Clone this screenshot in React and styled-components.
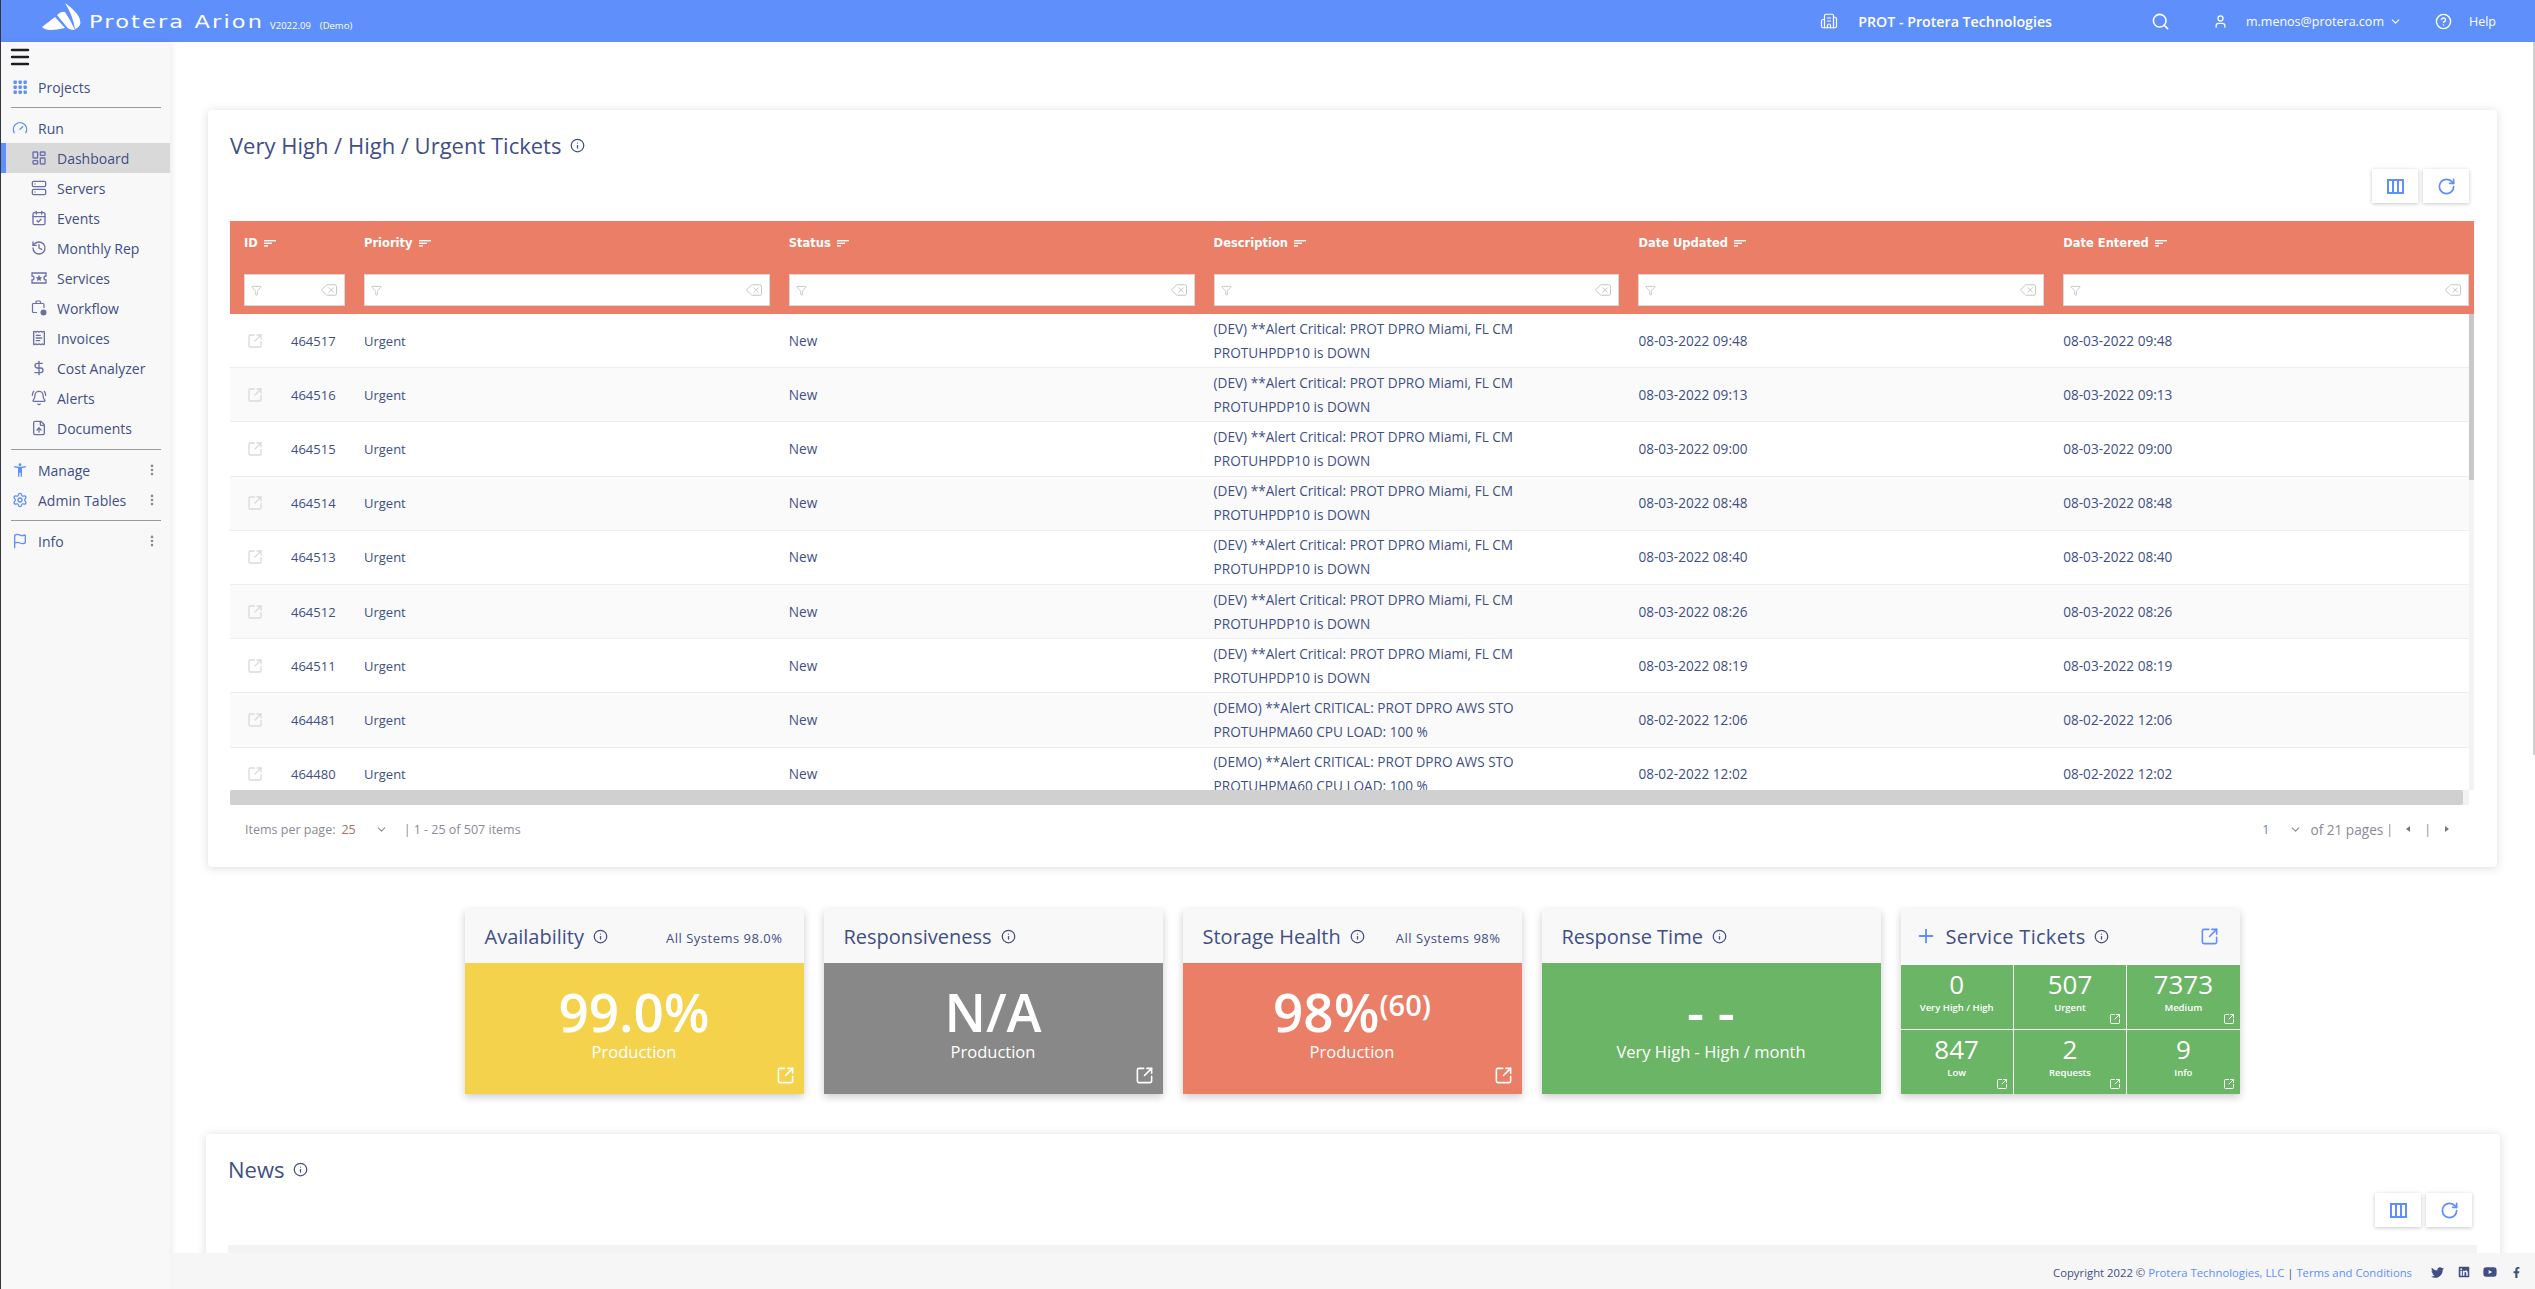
import React from 'react'
import styled, { createGlobalStyle } from 'styled-components'
import {
  Gauge, LayoutDashboard, Server, CalendarCheck, History, ReceiptText,
  DollarSign, BellRing, FileUp, Settings, Flag, EllipsisVertical,
  SquareArrowOutUpRight, RotateCw, Delete, Funnel, Building2, Search, User,
  ChevronDown, CircleHelp, Info, Plus, Menu,
} from 'lucide-react'
import { FaTwitter, FaLinkedin, FaYoutube, FaFacebookF } from 'react-icons/fa'
import { MdAccessibilityNew } from 'react-icons/md'

const navy = '#414f86'
const blue = '#5f8ffb'
const salmon = '#ea7e66'
const green = '#6ab566'

const GlobalStyle = createGlobalStyle`
  html, body { margin: 0; height: 100%; background: #fff; overflow: hidden; }
  #root { height: 100%; }
  * { box-sizing: border-box; }
  body { font-family: "Open Sans", "Noto Sans", sans-serif; color: ${navy}; }
`

const Page = styled.div`
  position: relative;
  height: 100vh;
  display: flex;
  flex-direction: column;
  overflow: hidden;
  border-left: 1px solid #35353d;
`

const PageThumb = styled.div`
  position: absolute;
  top: 42px;
  right: 0;
  width: 2px;
  height: 713px;
  background: #cfcfcf;
`

const TopBar = styled.header`
  height: 42px;
  flex: none;
  background: ${blue};
  color: #fff;
  display: flex;
  align-items: center;
  padding-left: 41px;
`

const BrandName = styled.span`
  display: inline-block;
  font-family: "DejaVu Sans", sans-serif;
  font-size: 18px;
  letter-spacing: 1.7px;
  margin-left: 7px;
  white-space: nowrap;
  transform: scaleX(1.25);
  transform-origin: left center;
`

const Version = styled.span`
  font-size: 9.5px;
  margin-left: ${p => p.$gap}px;
  padding-top: 8px;
  white-space: nowrap;
`

const TopRight = styled.div`
  margin-left: auto;
  display: flex;
  align-items: center;
  padding-right: 39px;
`

const Company = styled.span`
  font-size: 14.2px;
  font-weight: 600;
  margin: 0 99px 0 20px;
  white-space: nowrap;
`

const TopGap = styled.span`
  width: ${p => p.$width}px;
`

const Email = styled.span`
  font-size: 12.5px;
  margin: 0 5px 0 18px;
`

const HelpLabel = styled.span`
  font-size: 12.5px;
  margin-left: 17px;
`

const Body = styled.div`
  flex: 1;
  display: flex;
  min-height: 0;
`

const Sidebar = styled.nav`
  width: 169px;
  flex: none;
  background: #f8f8f8;
  box-shadow: 2px 0 6px rgba(0, 0, 0, 0.08);
  z-index: 2;
`

const MenuButton = styled.div`
  height: 30px;
  padding-left: 7px;
  display: flex;
  align-items: center;
  color: #1c1c22;
`

const NavRow = styled.div`
  height: 30px;
  display: flex;
  align-items: center;
  gap: 10px;
  padding-left: ${p => (p.$sub ? (p.$active ? 25 : 30) : 11)}px;
  padding-right: 11px;
  font-size: 14px;
  color: ${navy};
  background: ${p => (p.$active ? '#d9d9d9' : 'transparent')};
  border-left: ${p => (p.$active ? `5px solid ${blue}` : '0')};

  > svg:first-child {
    width: 16px;
    height: 16px;
    flex: none;
    color: ${p => (p.$sub ? '#6b70a8' : blue)};
  }
`

const NavMore = styled.span`
  margin-left: auto;
  display: flex;
  color: #8a8a94;
`

const TicketLink = styled(NavMore)`
  color: ${blue};
`

const Divider = styled.hr`
  border: 0;
  height: 1px;
  background: #999;
  margin: ${p => p.$top}px 9px ${p => p.$bottom}px 10px;
`

const Main = styled.main`
  flex: 1;
  min-width: 0;
  padding-top: 68px;
  overflow: hidden;
`

const Card = styled.section`
  background: #fff;
  border-radius: 4px;
  box-shadow: 0 1px 10px rgba(60, 60, 90, 0.18);
  padding: 20px 23px 0 22px;
  margin: ${p => p.$margin};
  height: ${p => p.$height}px;
  overflow: hidden;
`

const CardTitle = styled.h2`
  margin: 0;
  height: 30px;
  display: flex;
  align-items: center;
  gap: 9px;
  font-size: 22px;
  font-weight: 500;
  color: ${navy};

  svg { width: 15px; height: 15px; }
`

const Toolbar = styled.div`
  display: flex;
  justify-content: flex-end;
  gap: 5px;
  margin: 9px 5px 18px 0;
`

const ToolButton = styled.button`
  width: 46px;
  height: 34px;
  border: 0;
  background: #fff;
  color: ${blue};
  box-shadow: 0 1px 4px rgba(0, 0, 0, 0.22);
  display: flex;
  align-items: center;
  justify-content: center;
  padding: 0;
`

const gridColumns = '120px repeat(5, 424.8px)'

const TableHead = styled.div`
  background: ${salmon};
  height: 93px;
  display: grid;
  grid-template-columns: ${gridColumns};
`

const HeadCell = styled.div`
  padding: 0 5px 0 14px;
  display: flex;
  flex-direction: column;
`

const HeadLabel = styled.div`
  height: 46px;
  padding-bottom: 2px;
  display: flex;
  align-items: center;
  gap: 6px;
  font-family: "DejaVu Sans", sans-serif;
  font-size: 11.5px;
  font-weight: 700;
  color: #fff;
`

const FilterBox = styled.div`
  height: 32px;
  margin-top: 7px;
  background: #fff;
  border: 1px solid #d8d8d8;
  display: flex;
  align-items: center;
  justify-content: space-between;
  padding: 0 6px;
  color: #c4c4c4;
`

const TableBody = styled.div`
  display: flex;
  height: 476px;
`

const Rows = styled.div`
  flex: 1;
  min-width: 0;
  overflow: hidden;
`

const Row = styled.div`
  height: 54.2px;
  display: grid;
  grid-template-columns: ${gridColumns};
  align-items: center;
  background: ${p => (p.$even ? '#fafafa' : '#fff')};
  border-bottom: 1px solid #eeeeee;
  font-size: 13px;
  color: ${navy};
`

const IdCell = styled.div`
  display: flex;
  align-items: center;
  padding-left: 17px;
  gap: 28px;
  color: #dadada;
`

const IdText = styled.span`
  color: ${navy};
`

const Cell = styled.div`
  padding-left: 14px;
  line-height: 24px;
  white-space: pre-line;
  font-size: ${p => (p.$wide ? 13.6 : 13)}px;
`

const VScroll = styled.div`
  width: 5px;
  flex: none;
  background: #f3f3f3;
`

const VThumb = styled.div`
  height: 166px;
  background: #c8c8c8;
`

const HScroll = styled.div`
  height: 15px;
  padding-right: 11px;
  background: linear-gradient(to left, #fff 5px, #f3f3f3 5px);
`

const HThumb = styled.div`
  height: 15px;
  background: #cfd0cf;
  border-radius: 2px;
`

const Pager = styled.div`
  display: flex;
  align-items: center;
  height: 54px;
  padding: 0 25px 6px 15px;
  font-size: 12.5px;
  color: #8a8a96;
`

const PagerValue = styled.span`
  color: ${p => p.$color};
  margin-left: ${p => p.$left};
`

const PagerPages = styled.span`
  font-size: 13.6px;
`

const PagerChevron = styled(ChevronDown)`
  margin: ${p => p.$margin};
`

const PagerSep = styled.span`
  color: #8a8a96;
  margin: ${p => p.$margin};
`

const Arrow = styled.span`
  width: 0;
  height: 0;
  border-top: 3.5px solid transparent;
  border-bottom: 3.5px solid transparent;
  border-${p => (p.$left ? 'right' : 'left')}: 4px solid #777;
`

const KpiRow = styled.div`
  display: flex;
  justify-content: center;
  gap: 20px;
  margin-top: 42px;
  padding-right: 1px;
`

const Kpi = styled.article`
  width: 339px;
  height: 185px;
  display: flex;
  flex-direction: column;
  box-shadow: 0 3px 8px rgba(0, 0, 0, 0.2);
`

const KpiHead = styled.div`
  height: 54px;
  flex: none;
  background: #f8f8f8;
  display: flex;
  align-items: center;
  padding: 0 21px 0 20px;
  gap: 9px;
  font-size: 20px;
  color: ${navy};

  > svg { width: 15px; height: 15px; }
`

const KpiNote = styled.span`
  margin-left: auto;
  font-size: 13px;
  letter-spacing: 0.5px;
  padding-top: 3px;
`

const KpiBody = styled.div`
  position: relative;
  flex: 1;
  background: ${p => p.$color};
  color: #fff;
  display: flex;
  flex-direction: column;
  align-items: center;
  padding-top: 20px;
`

const KpiValue = styled.div`
  font-size: 53px;
  line-height: 57px;
  font-weight: 600;
  white-space: nowrap;
`

const KpiSup = styled.span`
  font-size: 29px;
  line-height: 0;
  vertical-align: 16px;
  font-weight: 600;
`

const KpiLabel = styled.div`
  font-size: 16.5px;
  line-height: 24px;
`

const CornerLink = styled.span`
  position: absolute;
  right: ${p => p.$right}px;
  bottom: ${p => p.$bottom}px;
  display: flex;
`

const TicketHead = styled(KpiHead)`
  padding: 0 21px 0 14px;
  gap: 9px;
  letter-spacing: 0.3px;

  > svg:first-child { width: 22px; height: 22px; color: ${blue}; }
`

const TicketGrid = styled.div`
  flex: 1;
  display: grid;
  grid-template-columns: repeat(3, 1fr);
  grid-template-rows: repeat(2, 1fr);
  gap: 1px;
  background: #fff;
  margin-top: 2px;
`

const TicketCell = styled.div`
  position: relative;
  background: ${green};
  color: #fff;
  display: flex;
  flex-direction: column;
  align-items: center;
  padding-top: 2px;
`

const TicketNum = styled.div`
  font-size: 26px;
  line-height: 34px;
`

const TicketLabel = styled.div`
  font-size: 9.5px;
  line-height: 14px;
  font-weight: 600;
`

const NewsHeader = styled.div`
  height: 60px;
  background: #f3f3f3;
`

const Footer = styled.footer`
  position: absolute;
  left: 169px;
  right: 0;
  bottom: 0;
  height: 36px;
  background: #f6f6f6;
  display: flex;
  align-items: center;
  justify-content: flex-end;
  padding: 2px 13.5px 0 0;
  font-size: 11.3px;
  color: ${navy};
  z-index: 3;
`

const FooterLink = styled.span`
  color: ${blue};
`

const Social = styled.span`
  display: flex;
  align-items: center;
  gap: 13.5px;
  margin-left: 19px;
  color: ${navy};
`

function Logo() {
  return (
    <svg width="40" height="30" viewBox="0 0 40 30" style={{ marginTop: -12 }}>
      <path fill="#fff" d="M0 27 L13 17 L23 28 Q15 30 8 30 Q3 30 0 27Z" />
      <path fill="#fff" d="M15 15 Q19 11 23 12 Q29 21 33 30 Q26 30 24 26Z" />
      <path fill="#fff" d="M23 3 Q33 10 37 17 Q39 22 38 25 Q36 28 33 29 Q31 16 23 3Z" />
    </svg>
  )
}

function SortIcon() {
  return (
    <svg width="12" height="7" viewBox="0 0 12 7" fill="#fff">
      <rect x="0" y="0" width="12" height="1.4" />
      <rect x="0" y="2.6" width="8" height="1.4" />
      <rect x="0" y="5.2" width="4" height="1.4" />
    </svg>
  )
}

function ProjectsIcon() {
  const spots = [1.5, 6.5, 11.5]
  return (
    <svg viewBox="0 0 16 16" fill="currentColor">
      {spots.map(y => spots.map(x => <rect key={`${x}-${y}`} x={x} y={y} width="3.4" height="3.4" rx="0.8" />))}
    </svg>
  )
}

function TicketStarIcon() {
  return (
    <svg viewBox="0 0 16 16" fill="none" stroke="currentColor" strokeWidth="1.3">
      <path d="M1 3h14v3a2 2 0 0 0 0 4v3H1v-3a2 2 0 0 0 0-4z" />
      <path fill="currentColor" stroke="none" d="M8 4.800l1 2.100 2.300.3-1.700 1.600.4 2.300-2-1.100-2 1.100.4-2.300-1.700-1.600 2.300-.3z" />
    </svg>
  )
}

function WorkflowIcon() {
  return (
    <svg viewBox="0 0 16 16" fill="none" stroke="currentColor" strokeWidth="1.2">
      <path d="M6 12.500H2.500a1 1 0 0 1-1-1v-7a1 1 0 0 1 1-1h9.500a1 1 0 0 1 1 1V8" />
      <path d="M5 3.500V2a1 1 0 0 1 1-1h2.500a1 1 0 0 1 1 1v1.500" />
      <circle cx="12.500" cy="12.500" r="3" fill="currentColor" stroke="none" />
    </svg>
  )
}

function ColumnsIcon() {
  return (
    <svg width="17" height="15" viewBox="0 0 17 15" fill="none" stroke="currentColor" strokeWidth="2">
      <rect x="1" y="1" width="15" height="13" />
      <path d="M6 1v13M11 1v13" />
    </svg>
  )
}

const subNav = [
  ['Dashboard', LayoutDashboard],
  ['Servers', Server],
  ['Events', CalendarCheck],
  ['Monthly Rep', History],
  ['Services', TicketStarIcon],
  ['Workflow', WorkflowIcon],
  ['Invoices', ReceiptText],
  ['Cost Analyzer', DollarSign],
  ['Alerts', BellRing],
  ['Documents', FileUp],
]

const dev = '(DEV) **Alert Critical: PROT DPRO Miami, FL CM\nPROTUHPDP10 is DOWN'
const demo = '(DEMO) **Alert CRITICAL: PROT DPRO AWS STO\nPROTUHPMA60 CPU LOAD: 100 %'

const tickets = [
  ['464517', dev, '08-03-2022 09:48'],
  ['464516', dev, '08-03-2022 09:13'],
  ['464515', dev, '08-03-2022 09:00'],
  ['464514', dev, '08-03-2022 08:48'],
  ['464513', dev, '08-03-2022 08:40'],
  ['464512', dev, '08-03-2022 08:26'],
  ['464511', dev, '08-03-2022 08:19'],
  ['464481', demo, '08-02-2022 12:06'],
  ['464480', demo, '08-02-2022 12:02'],
]

const columns = ['ID', 'Priority', 'Status', 'Description', 'Date Updated', 'Date Entered']

const ticketCounts = [
  ['0', 'Very High / High', false],
  ['507', 'Urgent', true],
  ['7373', 'Medium', true],
  ['847', 'Low', true],
  ['2', 'Requests', true],
  ['9', 'Info', true],
]

function TableTools() {
  return (
    <Toolbar>
      <ToolButton><ColumnsIcon /></ToolButton>
      <ToolButton><RotateCw size={19} strokeWidth={2.2} /></ToolButton>
    </Toolbar>
  )
}

function KpiCard({ title, note, color, value, sup, label, link = true }) {
  return (
    <Kpi>
      <KpiHead>
        {title}
        <Info />
        {note && <KpiNote>{note}</KpiNote>}
      </KpiHead>
      <KpiBody $color={color}>
        <KpiValue>{value}{sup && <KpiSup>{sup}</KpiSup>}</KpiValue>
        <KpiLabel>{label}</KpiLabel>
        {link && (
          <CornerLink $right={9} $bottom={9}>
            <SquareArrowOutUpRight size={19} />
          </CornerLink>
        )}
      </KpiBody>
    </Kpi>
  )
}

export default function App() {
  return (
    <Page>
      <GlobalStyle />
      <PageThumb />
      <TopBar>
        <Logo />
        <BrandName>Protera Arion</BrandName>
        <Version $gap={41}>V2022.09</Version>
        <Version $gap={9}>(Demo)</Version>
        <TopRight>
          <Building2 size={18} strokeWidth={1.6} />
          <Company>PROT - Protera Technologies</Company>
          <Search size={19} />
          <TopGap $width={43} />
          <User size={15} />
          <Email>m.menos@protera.com</Email>
          <ChevronDown size={13} />
          <TopGap $width={33} />
          <CircleHelp size={17} />
          <HelpLabel>Help</HelpLabel>
        </TopRight>
      </TopBar>
      <Body>
        <Sidebar>
          <MenuButton><Menu size={24} strokeWidth={2.4} /></MenuButton>
          <NavRow><ProjectsIcon />Projects</NavRow>
          <Divider $top={5} $bottom={5} />
          <NavRow><Gauge />Run</NavRow>
          {subNav.map(([name, Icon], i) => (
            <NavRow key={name} $sub $active={i === 0}><Icon />{name}</NavRow>
          ))}
          <Divider $top={6} $bottom={5} />
          <NavRow><MdAccessibilityNew />Manage<NavMore><EllipsisVertical size={14} strokeWidth={2.5} /></NavMore></NavRow>
          <NavRow><Settings />Admin Tables<NavMore><EllipsisVertical size={14} strokeWidth={2.5} /></NavMore></NavRow>
          <Divider $top={5} $bottom={5} />
          <NavRow><Flag />Info<NavMore><EllipsisVertical size={14} strokeWidth={2.5} /></NavMore></NavRow>
        </Sidebar>
        <Main>
          <Card $margin="0 38px 0 38px" $height={757}>
            <CardTitle>Very High / High / Urgent Tickets <Info /></CardTitle>
            <TableTools />
            <TableHead>
              {columns.map(c => (
                <HeadCell key={c}>
                  <HeadLabel>{c}<SortIcon /></HeadLabel>
                  <FilterBox>
                    <Funnel size={11} />
                    <Delete size={18} strokeWidth={1.3} />
                  </FilterBox>
                </HeadCell>
              ))}
            </TableHead>
            <TableBody>
              <Rows>
                {tickets.map(([id, desc, date], i) => (
                  <Row key={id} $even={i % 2 === 1}>
                    <IdCell>
                      <SquareArrowOutUpRight size={16} />
                      <IdText>{id}</IdText>
                    </IdCell>
                    <Cell>Urgent</Cell>
                    <Cell $wide>New</Cell>
                    <Cell $wide>{desc}</Cell>
                    <Cell $wide>{date}</Cell>
                    <Cell $wide>{date}</Cell>
                  </Row>
                ))}
              </Rows>
              <VScroll><VThumb /></VScroll>
            </TableBody>
            <HScroll><HThumb /></HScroll>
            <Pager>
              Items per page:
              <PagerValue $color="#a5705f" $left="6px">25</PagerValue>
              <PagerChevron size={13} $margin="0 0 0 19px" />
              <PagerSep $margin="0 3px 0 16px">|</PagerSep>
              1 - 25 of 507 items
              <PagerValue $color="#6d86b5" $left="auto">1</PagerValue>
              <PagerChevron size={13} $margin="0 9px 0 19px" />
              <PagerPages>of 21 pages</PagerPages>
              <PagerSep $margin="0 13px 0 3px">|</PagerSep>
              <Arrow $left />
              <PagerSep $margin="0 14px 0 14px">|</PagerSep>
              <Arrow />
            </Pager>
          </Card>
          <KpiRow>
            <KpiCard title="Availability" note="All Systems 98.0%" color="#f4d24c" value="99.0%" label="Production" />
            <KpiCard title="Responsiveness" color="#888888" value="N/A" label="Production" />
            <KpiCard title="Storage Health" note="All Systems 98%" color={salmon} value="98%" sup="(60)" label="Production" />
            <KpiCard title="Response Time" color={green} value="- -" label="Very High - High / month" link={false} />
            <Kpi>
              <TicketHead>
                <Plus strokeWidth={2} />
                Service Tickets
                <Info />
                <TicketLink><SquareArrowOutUpRight size={19} /></TicketLink>
              </TicketHead>
              <TicketGrid>
                {ticketCounts.map(([n, label, link]) => (
                  <TicketCell key={label}>
                    <TicketNum>{n}</TicketNum>
                    <TicketLabel>{label}</TicketLabel>
                    {link && (
                      <CornerLink $right={5} $bottom={4}>
                        <SquareArrowOutUpRight size={12} />
                      </CornerLink>
                    )}
                  </TicketCell>
                ))}
              </TicketGrid>
            </Kpi>
          </KpiRow>
          <Card $margin="40px 35px 0 36px" $height={300}>
            <CardTitle>News <Info /></CardTitle>
            <TableTools />
            <NewsHeader />
          </Card>
        </Main>
      </Body>
      <Footer>
        Copyright 2022 ©&nbsp;
        <FooterLink>Protera Technologies, LLC</FooterLink>
        &nbsp;|&nbsp;
        <FooterLink>Terms and Conditions</FooterLink>
        <Social>
          <FaTwitter size={13} />
          <FaLinkedin size={12} />
          <FaYoutube size={14} />
          <FaFacebookF size={11} />
        </Social>
      </Footer>
    </Page>
  )
}
